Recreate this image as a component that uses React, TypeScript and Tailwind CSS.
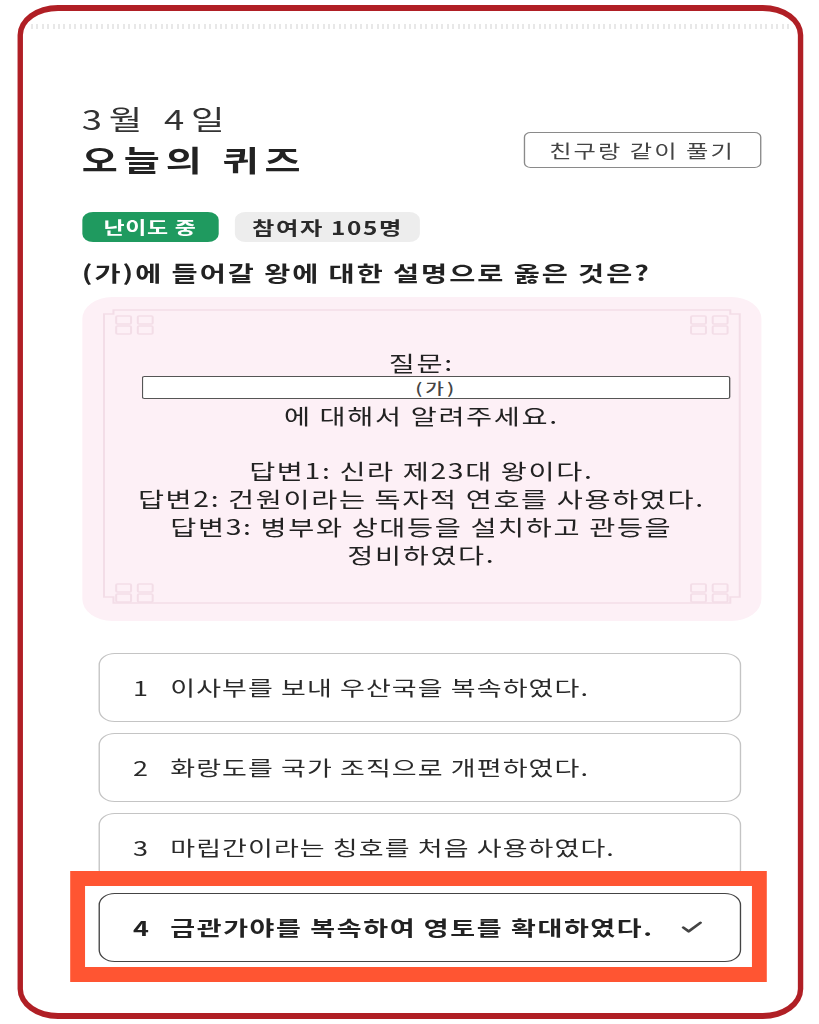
import { Check } from 'lucide-react';

const choices = [
  { no: 1, text: '이사부를 보내 우산국을 복속하였다.' },
  { no: 2, text: '화랑도를 국가 조직으로 개편하였다.' },
  { no: 3, text: '마립간이라는 칭호를 처음 사용하였다.' },
];

const answers = [
  '답변1: 신라 제23대 왕이다.',
  '답변2: 건원이라는 독자적 연호를 사용하였다.',
  '답변3: 병부와 상대등을 설치하고 관등을',
  '정비하였다.',
];

// Faint lattice frame drawn inside the quote card
function LatticeFrame() {
  const knots = (x: number, y: number, flip: boolean) => {
    const rows = flip ? [y - 8, y - 18] : [y, y + 10];
    return rows.flatMap((ry) =>
      [x, x + 16].map((rx) => (
        <rect key={`${rx}-${ry}`} x={rx} y={ry} width="11" height="8" rx="1" />
      ))
    );
  };
  return (
    <svg
      viewBox="0 0 502 324"
      preserveAspectRatio="none"
      className="absolute inset-0 w-full h-full pointer-events-none"
      fill="none"
      stroke="#f3dde7"
      strokeWidth="1.5"
    >
      <path d="M16 300 V17 H23 V13 H479 V17 H486 V300 H479 V306 H23 V300 Z" />
      <g>
        {knots(25, 19, false)}
        {knots(450, 19, false)}
        {knots(25, 305, true)}
        {knots(450, 305, true)}
      </g>
    </svg>
  );
}

export default function App() {
  return (
    <div className="w-[819px] h-[1024px] overflow-hidden bg-white">
      <div className="w-[607px] h-[1024px] origin-top-left [transform:scaleX(1.35)] font-['Noto_Sans_CJK_KR','Noto_Sans',sans-serif] text-[#222]">
        <div className="ml-[12.6px] mt-[5px] w-[582px] h-[1014px] border-x-[4.5px] border-y-[6px] border-[#b01f25] rounded-[30px] pl-[44px] pr-[27px]">
          {/* top perforation */}
          <div className="mt-[13px] -ml-[38px] -mr-[22px] h-[5px] bg-[repeating-linear-gradient(90deg,#e8e8e8_0_1.5px,transparent_1.5px_4px)]" />

          {/* Header */}
          <div className="mt-[70px] flex items-end justify-between">
            <div>
              <p className="text-[27px] leading-[39px] tracking-[5px] text-[#333]">3월 4일</p>
              <h1 className="text-[29px] leading-[42px] tracking-[4.4px] font-bold text-[#222]">오늘의 퀴즈</h1>
            </div>
            <button className="mb-[12px] w-[176px] h-[36px] border-[1.5px] border-[#8a8a8a] rounded-[5px] text-[18px] tracking-[1.5px] text-[#444] flex items-center justify-center">
              친구랑 같이 풀기
            </button>
          </div>

          {/* Badges */}
          <div className="mt-[32px] flex gap-[12.5px]">
            <span className="w-[101px] h-[30px] rounded-[8px] bg-[#1f9a5f] text-white text-[17px] tracking-[0.5px] font-bold flex items-center justify-center">
              난이도 중
            </span>
            <span className="w-[137px] h-[30px] rounded-[8px] bg-[#ededed] text-[#2a2a2a] text-[18px] tracking-[1.2px] font-bold flex items-center justify-center">
              참여자 105명
            </span>
          </div>

          <h2 className="mt-[16px] text-[21px] leading-[28px] tracking-[1.45px] font-bold text-[#222]">
            (가)에 들어갈 왕에 대한 설명으로 옳은 것은?
          </h2>

          {/* Quote card */}
          <div className="relative mt-[11px] h-[324px] rounded-[22px] bg-[#fdf0f6] pt-[51px] flex flex-col items-center text-[21px] leading-[28px] tracking-[1.2px] text-[#222]">
            <LatticeFrame />
            <p className="relative">질문:</p>
            <div className="relative w-[436px] h-[23px] ml-[22px] border-[1.5px] border-[#555] bg-white rounded-[2px] flex items-center justify-center text-[15px] leading-none font-medium tracking-[2.2px] text-[#444]">
              (가)
            </div>
            <p className="relative mt-[2px]">에 대해서 알려주세요.</p>
            <div className="relative mt-[27px] flex flex-col items-center">
              {answers.map((line) => (
                <p key={line}>{line}</p>
              ))}
            </div>
          </div>

          {/* Choices */}
          <div className="mt-[32px] ml-[12px] mr-[14.5px] flex flex-col gap-[11px]">
            {choices.map((c) => (
              <div
                key={c.no}
                className="h-[69px] border-[1.5px] border-[#c4c4c4] rounded-[12px] pl-[25px] flex items-center text-[20px] tracking-[0.8px] text-[#2a2a2a]"
              >
                <span className="w-[27.5px]">{c.no}</span>
                <span>{c.text}</span>
              </div>
            ))}
            <div className="relative">
              <div className="h-[69px] border-[1.5px] border-[#444] rounded-[12px] pl-[25px] pr-[26px] flex items-center text-[20px] tracking-[1.2px] font-bold text-[#222]">
                <span className="w-[27.5px]">4</span>
                <span className="flex-1">금관가야를 복속하여 영토를 확대하였다.</span>
                <Check className="w-[19px] h-[19px] text-[#444]" strokeWidth={3} />
              </div>
              {/* highlight marker */}
              <div className="absolute left-[-21px] right-[-19px] top-[-22px] bottom-[-20px] border-x-[11px] border-y-[15px] border-[#ff5532] pointer-events-none" />
            </div>
          </div>
        </div>
      </div>
    </div>
  );
}
